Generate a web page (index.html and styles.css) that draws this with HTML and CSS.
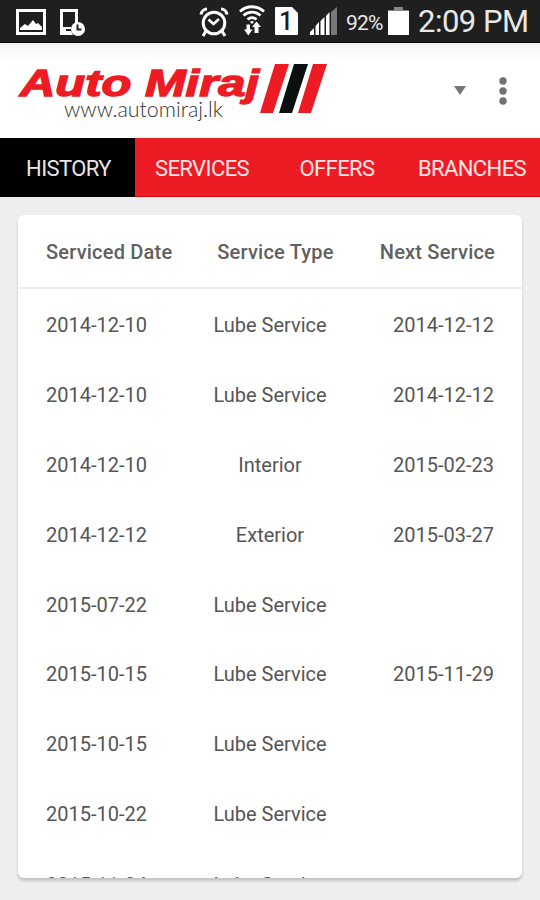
FILE: index.html
```
<!DOCTYPE html>
<html lang="en">
<head>
    <meta charset="utf-8">
    <title>Auto Miraj</title>
    <link rel="stylesheet" href="styles.css">
</head>
<body>
    <div class="status-bar">
        <svg class="icon-picture" width="30" height="26" viewBox="0 0 30 26">
            <path fill="#fff" fill-rule="evenodd" d="M0 0h30v26H0zM3 3v20h24V3z"/>
            <path fill="#fff" d="M4 21v-2l5-4 3 2 5-6 3 4 2-1 4 4v3z"/>
        </svg>
        <svg class="icon-device" width="26" height="27" viewBox="0 0 26 27">
            <path fill="#fff" fill-rule="evenodd" d="M0 0h18v14h-3V3H3v15h8v2H6v2h5l2 4H0z"/>
            <circle cx="18" cy="20" r="7" fill="#fff"/>
            <path fill="none" stroke="#1f1f1f" stroke-width="2" d="M17.500 15.500v5h4"/>
        </svg>
        <svg class="icon-alarm" width="30" height="30" viewBox="0 0 30 30">
            <g fill="none" stroke="#fff" stroke-width="3">
                <circle cx="15" cy="16" r="10.800"/>
                <path d="M2 7.500c.500-3 3-5.500 6-5.500M28 7.500c-.500-3-3-5.500-6-5.500M7 24l-3 5M23 24l3 5"/>
                <path stroke-width="2.600" d="M9.500 12.500l5 4.500 5.500-5"/>
            </g>
        </svg>
        <svg class="icon-wifi" width="26" height="31" viewBox="0 0 26 31">
            <g fill="none" stroke="#fff" stroke-width="2.800">
                <path d="M1 6.500C8 .2 18 .2 25 6.500M4.500 10.500c5-4.500 12-4.500 17 0M8.500 14.500c3-2.500 6-2.500 9 0"/>
            </g>
            <path fill="#fff" d="M11 17q2-2 4 0l-2 2zM7.500 19.500h3.500v5h2.500L9.300 30.500 5 24.500h2.500zM15.500 28v-6H13L17.500 16.500l4.500 5.500h-2.500v6z"/>
        </svg>
        <svg class="icon-sim" width="23" height="28" viewBox="0 0 23 28">
            <path fill="#fff" d="M1 0h16l6 6v21q0 1-1 1H1q-1 0-1-1V1q0-1 1-1z"/>
            <text x="11" y="23" text-anchor="middle">1</text>
        </svg>
        <svg class="icon-signal" width="27" height="28" viewBox="0 0 27 28">
            <path fill="#fff" d="M0 28v-3l4-4v7zM5.500 28v-9l3.500-4v13zM10.500 28V14l4-4v18zM16 28V9l3.500-4v23z"/>
            <path fill="#777" d="M21 28V5l6-5v28z"/>
        </svg>
        <span class="battery-level">92%</span>
        <svg class="icon-battery" width="21" height="28" viewBox="0 0 21 28">
            <path fill="#888" d="M6 0h9v3h6v2H0V3h6z"/>
            <path fill="#fff" d="M0 4h21v24H0z"/>
        </svg>
        <span class="time">2:09 PM</span>
    </div>

    <div class="header">
        <svg class="logo" width="310" height="62" viewBox="0 0 310 62">
            <text class="logo-name" x="2" y="36" textLength="239" lengthAdjust="spacingAndGlyphs">Auto Miraj</text>
            <text class="logo-url" x="46" y="56.500" textLength="159" lengthAdjust="spacingAndGlyphs">www.automiraj.lk</text>
            <path fill="#ed1c24" d="M257 4h14l-16 49h-13zM295 4h14l-16 49h-13z"/>
            <path fill="#0a0f10" d="M276 4h14l-16 49h-13z"/>
        </svg>
        <div class="header-actions">
            <svg width="12" height="9" viewBox="0 0 12 9"><path fill="#757575" d="M0 0h12L6 9z"/></svg>
            <svg width="8" height="28" viewBox="0 0 8 28">
                <g fill="#707070">
                    <circle cx="4" cy="4" r="3.700"/>
                    <circle cx="4" cy="14" r="3.700"/>
                    <circle cx="4" cy="24" r="3.700"/>
                </g>
            </svg>
        </div>
    </div>

    <div class="tabs">
        <div class="tab active">HISTORY</div>
        <div class="tab">SERVICES</div>
        <div class="tab">OFFERS</div>
        <div class="tab">BRANCHES</div>
    </div>

    <div class="card">
        <div class="row row-head"><span>Serviced Date</span><span>Service Type</span><span>Next Service</span></div>
        <div class="row"><span>2014-12-10</span><span>Lube Service</span><span>2014-12-12</span></div>
        <div class="row"><span>2014-12-10</span><span>Lube Service</span><span>2014-12-12</span></div>
        <div class="row"><span>2014-12-10</span><span>Interior</span><span>2015-02-23</span></div>
        <div class="row"><span>2014-12-12</span><span>Exterior</span><span>2015-03-27</span></div>
        <div class="row"><span>2015-07-22</span><span>Lube Service</span><span></span></div>
        <div class="row"><span>2015-10-15</span><span>Lube Service</span><span>2015-11-29</span></div>
        <div class="row"><span>2015-10-15</span><span>Lube Service</span><span></span></div>
        <div class="row"><span>2015-10-22</span><span>Lube Service</span><span></span></div>
        <div class="row"><span>2015-11-24</span><span>Lube Service</span><span></span></div>
    </div>
</body>
</html>
```
FILE: styles.css
```
* {
    box-sizing: border-box;
}

body {
    margin: 0;
    height: 900px;
    overflow: hidden;
    background-color: #eeeeee;
    font-family: Roboto, sans-serif;
}

svg {
    display: block;
    flex-shrink: 0;
}

.status-bar {
    display: flex;
    align-items: flex-start;
    height: 43px;
    padding: 7px 0 0 16px;
    background-color: #1f1f1f;
    border-bottom: 1px solid #000;
    color: #e8e8e8;
    white-space: nowrap;
}

.icon-picture {
    margin-top: 2px;
}

.icon-device {
    margin: 2px 0 0 14px;
}

.icon-alarm {
    margin-left: 113px;
}

.icon-wifi {
    margin: -2px 0 0 10px;
}

.icon-sim {
    margin-left: 10px;
}

.icon-sim text {
    font-size: 25px;
    font-weight: 500;
    fill: #1f1f1f;
}

.icon-signal {
    margin-left: 12px;
}

.battery-level {
    width: 37px;
    margin: 4px 0 0 9px;
    font-size: 21px;
    line-height: 24px;
    letter-spacing: -0.8px;
}

.icon-battery {
    margin-left: 5px;
}

.time {
    margin: -3px 0 0 9px;
    font-size: 31px;
    line-height: 36px;
    letter-spacing: -0.5px;
}

.header {
    display: flex;
    justify-content: space-between;
    align-items: center;
    height: 95px;
    padding: 0 33px 0 18px;
    background: linear-gradient(#f3f3f3, #fff 18px);
}

.logo {
    overflow: visible;
}

.logo-name {
    font-family: "Liberation Sans", sans-serif;
    font-size: 37px;
    font-weight: 700;
    font-style: italic;
    fill: #ed1c24;
    stroke: #ed1c24;
    stroke-width: 1.4px;
}

.logo-url {
    font-family: Lato, sans-serif;
    font-size: 21px;
    font-weight: 300;
    fill: #333;
}

.header-actions {
    display: flex;
    align-items: center;
    gap: 33px;
}

.tabs {
    display: flex;
    height: 59px;
    background-color: #ed1c24;
    border-bottom: 1px solid #d60b10;
}

.tab {
    width: 135px;
    height: 59px;
    line-height: 62px;
    padding-right: 1px;
    font-size: 22px;
    letter-spacing: -0.6px;
    text-align: center;
    color: #ffe4e4;
}

.tab.active {
    padding: 0 0 0 2px;
    background-color: #000;
    color: #e6e6e6;
}

.card {
    height: 663px;
    margin: 18px 18px 0;
    overflow: hidden;
    background-color: #fff;
    border-radius: 6px;
    box-shadow: 0 3px 3px rgba(0, 0, 0, 0.18);
}

.row {
    display: grid;
    grid-template-columns: 1fr 1fr 1fr;
    align-items: center;
    height: 69.8px;
    padding: 3px 28px 0;
    font-size: 20px;
    white-space: nowrap;
    color: #555;
}

.row span:nth-child(2) {
    text-align: center;
}

.row span:nth-child(3) {
    text-align: right;
}

.row:last-child {
    padding-top: 6px;
}

.row-head {
    height: 74px;
    padding: 2px 27px 0 28px;
    border-bottom: 2px solid #eeeeee;
    font-weight: 500;
    letter-spacing: 0.2px;
    color: #606060;
}

.row-head span:nth-child(2) {
    padding-left: 10px;
}
```
